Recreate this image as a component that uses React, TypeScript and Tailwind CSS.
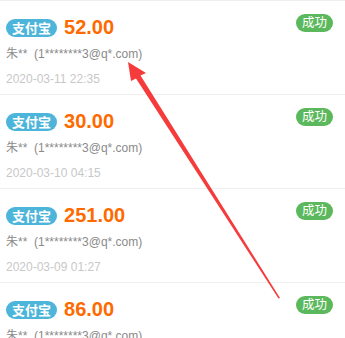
const rows = [
  { amount: '52.00', date: '2020-03-11 22:35' },
  { amount: '30.00', date: '2020-03-10 04:15' },
  { amount: '251.00', date: '2020-03-09 01:27' },
  { amount: '86.00', date: '2020-03-08 18:40' },
];

function Row({ amount, date }: { amount: string; date: string }) {
  return (
    <div className="flex h-[94px] shrink-0 justify-between border-b border-[#efefef] pl-[6px] pr-[12px]">
      <div className="flex flex-col">
        <div className="mt-[15px] flex h-[22px] items-center gap-[7px]">
          <span className="mt-[2px] flex h-[18px] items-center rounded-full bg-[#4db5da] px-[6px] text-[13px] font-bold leading-none text-white">
            支付宝
          </span>
          <span className="text-[20px] font-bold leading-none text-[#ff6a00]">{amount}</span>
        </div>
        <div className="mt-[9px] h-[14px] text-[12px] leading-[14px] text-[#8a8a8a]">
          朱**&nbsp;&nbsp;(1********3@q*.com)
        </div>
        <div className="mt-[11px] text-[12px] leading-[14px] text-[#c8c8c8]">{date}</div>
      </div>
      <div className="pt-[13px]">
        <span className="flex h-[18px] items-center rounded-full bg-[#5cb85c] px-[6px] text-[12.5px] leading-none text-white">
          成功
        </span>
      </div>
    </div>
  );
}

export default function App() {
  return (
    <div
      className="relative h-[338px] w-[345px] overflow-hidden border-t border-[#efefef] bg-white"
      style={{ fontFamily: '"Liberation Sans", "Noto Sans CJK SC", sans-serif' }}
    >
      <div className="flex flex-col">
        {rows.map((r) => (
          <Row key={r.amount} amount={r.amount} date={r.date} />
        ))}
      </div>
      {/* red annotation arrow */}
      <svg className="absolute left-0 top-0" width="345" height="338" viewBox="0 0 345 338">
        <path d="M128 61 L146 72 L140.5 74.5 L280 297 L278.5 297.5 L136 77.5 L131 80 Z" fill="#f53b3b" />
      </svg>
    </div>
  );
}
